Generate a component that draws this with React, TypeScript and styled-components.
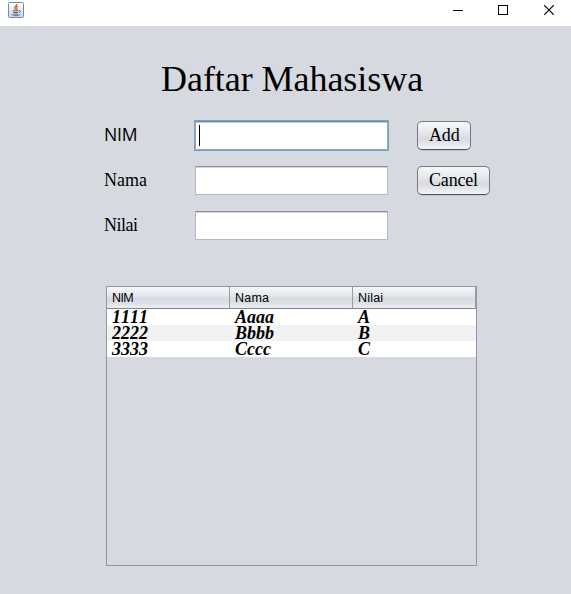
import React from 'react';
import styled, { createGlobalStyle, css } from 'styled-components';

const GlobalStyle = createGlobalStyle`
  * { box-sizing: border-box; }
  body { margin: 0; background: #d6d9e0; overflow: hidden; }
`;

const Window = styled.div`
  width: 571px;
  height: 594px;
  display: flex;
  flex-direction: column;
  background: #d6d9e0;
  color: #000;
  font-family: 'Liberation Serif', 'Times New Roman', serif;
  font-kerning: none;
`;

const TitleBar = styled.header`
  height: 26px;
  flex: none;
  display: flex;
  justify-content: space-between;
  background: #fff;
  padding: 2px 0 0 8px;
`;

const Controls = styled.div`
  display: grid;
  grid-template-columns: 45px 46px 10px;
  padding: 3px 17px 0 0;
`;

const Content = styled.main`
  display: flex;
  flex-direction: column;
  padding: 32px 94px 0 104px;
`;

const Heading = styled.h1`
  margin: 0 0 20px 57px;
  font-size: 36px;
  font-weight: 400;
  line-height: 42px;
  letter-spacing: -0.05px;
  white-space: nowrap;
`;

const Form = styled.form`
  display: grid;
  grid-template-columns: 91px 193px 1fr;
  grid-auto-rows: 29px;
  row-gap: 16px;
  padding-top: 1px;
`;

const Label = styled.label<{ $sans?: boolean; $tracking?: number }>`
  font-size: 18px;
  line-height: 29px;
  letter-spacing: ${(p) => p.$tracking ?? 0}px;
  ${(p) => p.$sans && css`
    font-family: 'Open Sans', sans-serif;
    font-size: 17.6px;
    line-height: 27px;
  `}
`;

const Field = styled.div<{ $focused?: boolean }>`
  height: 29px;
  display: flex;
  background: #fff;
  border: 1px solid #b5b8be;
  border-top-color: #8b8d92;
  box-shadow: inset 0 1px 0 #d4d5d8;
  padding: 3px;
  ${(p) => p.$focused && css`
    border-color: #8fa9c3;
    border-top-color: #7c8b9d;
    box-shadow: 0 0 0 1px #7ba1c7, inset 0 1px 0 #c3cad3;
  `}
`;

const Caret = styled.span`
  width: 1px;
  height: 21px;
  background: #000;
`;

const Button = styled.button`
  justify-self: start;
  height: 29px;
  margin-left: 29px;
  padding: 0 11px 1px;
  border: 1px solid #777a80;
  border-bottom-color: #4f5258;
  border-radius: 5px;
  background: linear-gradient(#f7f8fa, #e9ebef 32%, #d8dbe1 60%, #dfe2e8 75%, #f4f5f8);
  box-shadow: 0 1px 0 #c3c6cd;
  color: #000;
  font: 18px/26px 'Liberation Serif', 'Times New Roman', serif;
  letter-spacing: -0.18px;
`;

const TablePane = styled.section`
  width: 371px;
  height: 280px;
  margin: 46px 0 0 2px;
  border: 1px solid #9297a1;
`;

const Table = styled.table`
  width: 369px;
  table-layout: fixed;
  border-collapse: separate;
  border-spacing: 0;
`;

const HeadCell = styled.th<{ $tracking: number }>`
  height: 22px;
  padding: 0 0 0 5px;
  border-right: 1px solid #969ba6;
  border-bottom: 1px solid #81858e;
  background: linear-gradient(#f5f6f8, #e5e8ed 40%, #d8dbe2 55%, #dce0e6 75%, #eceef2);
  font-family: 'Liberation Sans', Arial, sans-serif;
  font-size: 12.5px;
  font-weight: 400;
  line-height: 20px;
  letter-spacing: ${(p) => p.$tracking}px;
  text-align: left;
`;

const Row = styled.tr`
  background: #fff;
  &:nth-child(even) { background: #f2f2f2; }
`;

const Cell = styled.td`
  height: 16px;
  padding: 0 0 0 5px;
  font-size: 18px;
  font-style: italic;
  font-weight: 700;
  line-height: 16px;
`;

const JavaIcon = () => (
  <svg width="16" height="16" viewBox="0 0 16 16">
    <defs>
      <linearGradient id="tile" x2="0" y2="1">
        <stop stopColor="#fff" />
        <stop offset="1" stopColor="#cbd6e2" />
      </linearGradient>
    </defs>
    <rect x=".5" y=".5" width="15" height="15" rx="1" fill="url(#tile)" stroke="#6e8ca8" />
    <path d="M8.6 2C9.4 4 5.8 4.5 6.6 6.2L7.6 7.6M9.9 4.2C8 5.1 8 5.7 8.7 6.4S8.8 7.5 8.3 8" fill="none" stroke="#d9682f" strokeWidth="1.3" />
    <path d="M4.5 8.8h6.2M5.1 10.4h5M5.8 12h3.9M11 8.6c2-.4 2 1.4.1 2.2M3.5 12.3c.8 1.5 7.6 1.3 8.6.2" fill="none" stroke="#53677e" />
  </svg>
);

const ControlIcon = ({ d, crisp }: { d: string; crisp?: boolean }) => (
  <svg width="10" height="10" viewBox="0 0 10 10" shapeRendering={crisp ? 'crispEdges' : undefined}>
    <path d={d} fill="none" stroke="#000" strokeWidth={crisp ? 1 : 1.15} />
  </svg>
);

const fields = [
  { label: 'NIM', sans: true, focused: true, tracking: -0.2, action: 'Add' },
  { label: 'Nama', action: 'Cancel' },
  { label: 'Nilai', tracking: -0.5 },
];

const columns = [
  { title: 'NIM', tracking: -0.6 },
  { title: 'Nama', tracking: 0.2 },
  { title: 'Nilai', tracking: 0.2 },
];

const students = [
  ['1111', 'Aaaa', 'A'],
  ['2222', 'Bbbb', 'B'],
  ['3333', 'Cccc', 'C'],
];

export default function App() {
  return (
    <Window>
      <GlobalStyle />
      <TitleBar>
        <JavaIcon />
        <Controls>
          <ControlIcon crisp d="M0 5.5h10" />
          <ControlIcon crisp d="M.5.5h9v9h-9z" />
          <ControlIcon d="M.2.2l9.6 9.6M9.8.2L.2 9.8" />
        </Controls>
      </TitleBar>
      <Content>
        <Heading>Daftar Mahasiswa</Heading>
        <Form>
          {fields.map((f) => (
            <React.Fragment key={f.label}>
              <Label $sans={f.sans} $tracking={f.tracking}>{f.label}</Label>
              <Field $focused={f.focused}>{f.focused && <Caret />}</Field>
              {f.action ? <Button type="button">{f.action}</Button> : <span />}
            </React.Fragment>
          ))}
        </Form>
        <TablePane>
          <Table>
            <thead>
              <tr>
                {columns.map((c) => (
                  <HeadCell key={c.title} $tracking={c.tracking}>{c.title}</HeadCell>
                ))}
              </tr>
            </thead>
            <tbody>
              {students.map((s) => (
                <Row key={s[0]}>{s.map((v) => <Cell key={v}>{v}</Cell>)}</Row>
              ))}
            </tbody>
          </Table>
        </TablePane>
      </Content>
    </Window>
  );
}
